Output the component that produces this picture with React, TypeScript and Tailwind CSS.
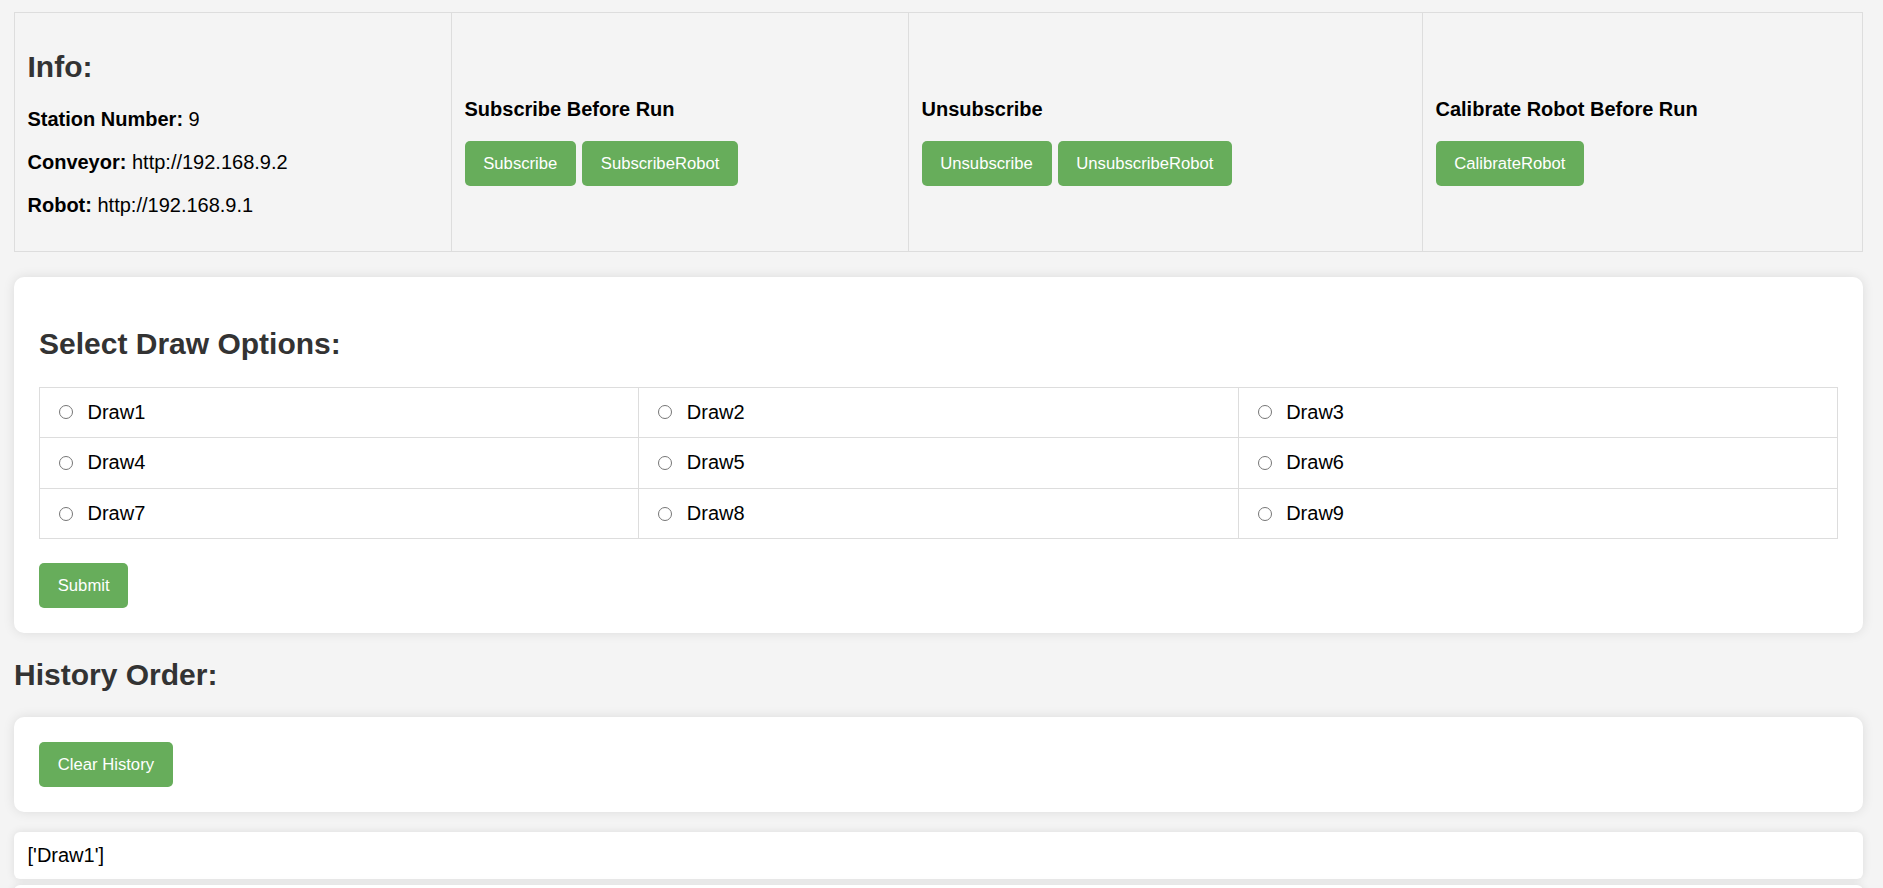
import React from "react";

function Btn({ children }: { children: React.ReactNode }) {
  return (
    <button
      type="button"
      className="h-[45px] px-[18.75px] rounded-[5px] bg-[#67ad5b] text-white text-[16.67px] leading-[19px] whitespace-nowrap"
    >
      {children}
    </button>
  );
}

function Radio({ label }: { label: string }) {
  return (
    <div className="h-[50.67px] border-r border-b border-[#ddd] flex items-center pl-[19px]">
      <span className="w-[14px] h-[14px] rounded-full border border-[#767676] bg-white shrink-0" />
      <span className="ml-[14.5px] text-[20px] leading-[23px] text-black">{label}</span>
    </div>
  );
}

export default function App() {
  const draws = ["Draw1", "Draw2", "Draw3", "Draw4", "Draw5", "Draw6", "Draw7", "Draw8", "Draw9"];
  return (
    <div className="h-[888px] overflow-hidden bg-[#f4f4f4] font-['Liberation_Sans',Arial,sans-serif] text-black">
      <div className="pl-[14px] pr-[20px] pt-[12px]">
        {/* Top info table */}
        <div className="flex border border-[#ddd]">
          <div className="w-[436px] px-[12.5px] pt-[12px] pb-[12.5px]">
            <h2 className="mt-[25px] mb-[24px] text-[30px] leading-[34px] font-bold text-[#333]">Info:</h2>
            <p className="text-[20px] leading-[23px]">
              <span className="font-bold">Station Number:</span> 9
            </p>
            <p className="mt-[20px] text-[20px] leading-[23px]">
              <span className="font-bold">Conveyor:</span> http://192.168.9.2
            </p>
            <p className="mt-[20px] mb-[21px] text-[20px] leading-[23px]">
              <span className="font-bold">Robot:</span> http://192.168.9.1
            </p>
          </div>
          <div className="w-[457px] border-l border-[#ddd] px-[12.5px] pt-[85px]">
            <h4 className="text-[20px] leading-[23px] font-bold">Subscribe Before Run</h4>
            <div className="mt-[20px] flex gap-[6px]">
              <Btn>Subscribe</Btn>
              <Btn>SubscribeRobot</Btn>
            </div>
          </div>
          <div className="w-[514px] border-l border-[#ddd] px-[12.5px] pt-[85px]">
            <h4 className="text-[20px] leading-[23px] font-bold">Unsubscribe</h4>
            <div className="mt-[20px] flex gap-[6px]">
              <Btn>Unsubscribe</Btn>
              <Btn>UnsubscribeRobot</Btn>
            </div>
          </div>
          <div className="w-[440px] border-l border-[#ddd] px-[12.5px] pt-[85px]">
            <h4 className="text-[20px] leading-[23px] font-bold">Calibrate Robot Before Run</h4>
            <div className="mt-[20px] flex gap-[6px]">
              <Btn>CalibrateRobot</Btn>
            </div>
          </div>
        </div>

        {/* Draw options card */}
        <div className="mt-[25px] bg-white rounded-[10px] shadow-[0_0_12px_rgba(0,0,0,0.1)] p-[25px]">
          <h2 className="mt-[25px] mb-[26px] text-[30px] leading-[34px] font-bold text-[#333]">Select Draw Options:</h2>
          <div className="grid grid-cols-3 border-t border-l border-[#ddd]">
            {draws.map((d) => (
              <Radio key={d} label={d} />
            ))}
          </div>
          <div className="mt-[24px]">
            <Btn>Submit</Btn>
          </div>
        </div>

        <h2 className="mt-[25px] mb-[25px] text-[30px] leading-[34px] font-bold text-[#333]">History Order:</h2>

        <div className="bg-white rounded-[10px] shadow-[0_0_12px_rgba(0,0,0,0.1)] p-[25px]">
          <Btn>Clear History</Btn>
        </div>

        <div className="mt-[20px] bg-white rounded-[6px] shadow-[0_0_8px_rgba(0,0,0,0.1)] pl-[13.5px] py-[12px] text-[20px] leading-[23px]">
          ['Draw1']
        </div>
        <div className="mt-[6px] h-[47px] bg-white rounded-[6px] shadow-[0_0_8px_rgba(0,0,0,0.1)]" />
      </div>
    </div>
  );
}
